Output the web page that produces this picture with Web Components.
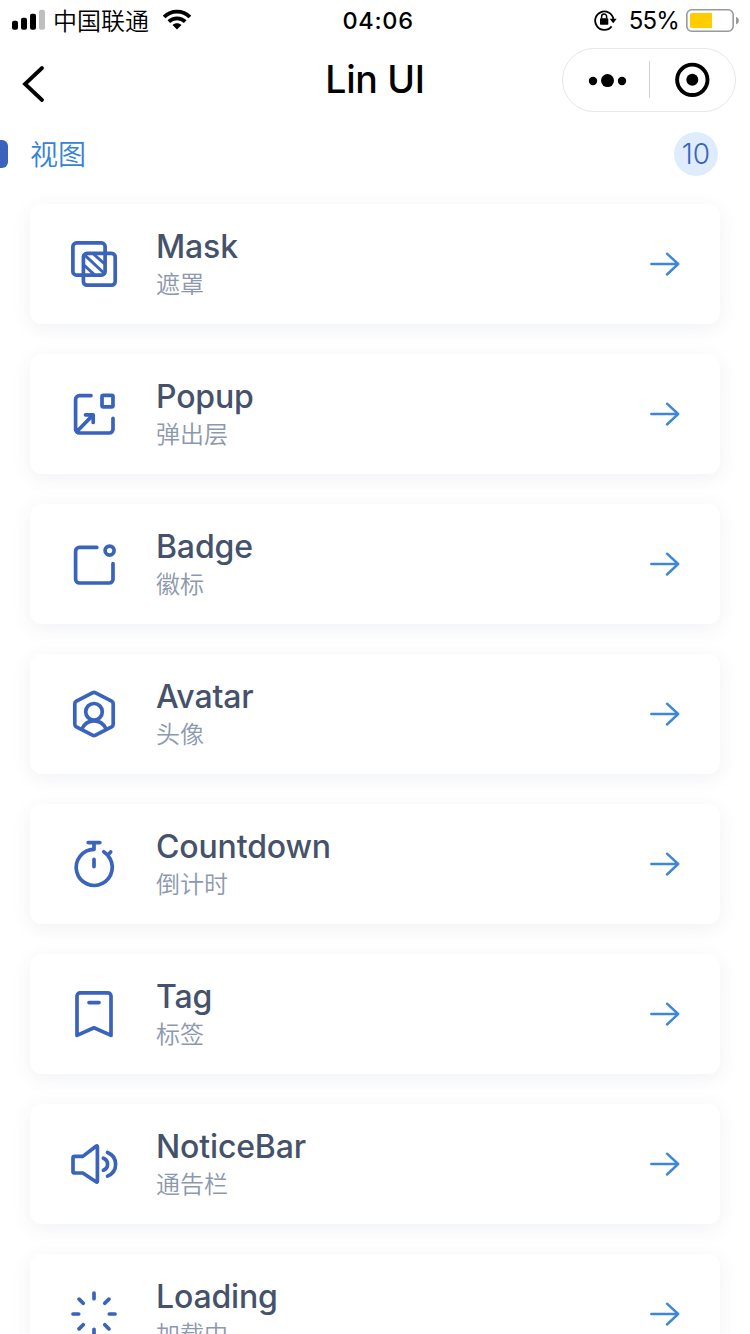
<!DOCTYPE html>
<html lang="zh-CN">
<head>
<meta charset="utf-8">
<title>Lin UI</title>
<style>
html,body{margin:0;background:#fff}
body{width:750px;height:1334px;overflow:hidden;font-family:Inter,"Noto Sans CJK SC",sans-serif}
</style>
</head>
<body>
<lin-page></lin-page>
<script>
const define = (name, html) => customElements.define(name, class extends HTMLElement {
  connectedCallback() {
    if (this.shadowRoot) return;
    const t = document.createElement('template');
    t.innerHTML = typeof html === 'function' ? html(this) : html;
    this.attachShadow({mode: 'open'}).append(t.content.cloneNode(true));
  }
});

const icons = {
  mask: '<rect x="4.9" y="4.9" width="32.2" height="32.2" rx="3.6"/><rect x="15.4" y="15.4" width="31.8" height="31.8" rx="3.6"/><path stroke-width="2.9" d="M17 17.4l18.6 17.4M26.5 17l9.6 8.4M16.4 27.5l9.4 8.6"/>',
  popup: '<path d="M23 7.6H11.4a3.8 3.8 0 0 0-3.8 3.8v29.8A3.8 3.8 0 0 0 11.4 45h29.8a3.8 3.8 0 0 0 3.8-3.8V30.3M9.4 43L24.6 27.4M17.5 26.8H25.2V34.5"/><rect x="34" y="7.4" width="11" height="11.4" rx="1.4"/>',
  badge: '<path d="M28.8 9.4H11.4a3.8 3.8 0 0 0-3.8 3.8v28A3.8 3.8 0 0 0 11.4 45h29.8a3.8 3.8 0 0 0 3.8-3.8V25.6"/><circle cx="41.6" cy="12.6" r="4.5"/>',
  avatar: '<path d="M24.4 4.8Q26 4 27.6 4.8L43.6 13.2Q45.2 14.1 45.2 15.8V36.2Q45.2 37.9 43.6 38.8L27.6 47.2Q26 48 24.4 47.2L8.4 38.8Q6.8 37.9 6.8 36.2V15.8Q6.8 14.1 8.4 13.2Z"/><circle cx="26" cy="23.8" r="8.3"/><path d="M14 40.8C16.2 36 20.6 32.8 26 32.8S35.8 36 38 40.8"/>',
  countdown: '<path d="M40 17.8A18 18 0 1 1 26 11.4V4.9M20.2 4.6H31.8M26 21.4V28.6M35.8 13.8L39.8 17.2L42.7 13.9"/>',
  tag: '<path d="M12.2 4.8H39.8A3.2 3.2 0 0 1 43 8V47.4L26 39.8L9 47.4V8A3.2 3.2 0 0 1 12.2 4.8ZM21 14.6H31"/>',
  noticebar: '<path d="M6.6 18.4H14.8L28 8.3Q29.4 7.4 29.4 9V43Q29.4 44.6 28 43.7L14.8 35H6.6Q5 35 5 33.4V20Q5 18.4 6.6 18.4ZM35.4 20.2C41 22.5 41 30 35.4 32.2M39.5 14.5C50.3 18.8 50.3 33.8 39.5 38.1"/>',
  loading: '<path d="M26 5V10.7M26 41.3V47M5 26H10.7M41.3 26H47M11.1 11.1L15.2 15.2M36.8 36.8L40.9 40.9M40.9 11.1L36.8 15.2M15.2 36.8L11.1 40.9"/>'
};

define('lin-icon', el => `<style>
:host{display:block;width:52px;height:52px;flex:none}
svg{display:block;fill:none;stroke:#3963bc;stroke-width:3.7;stroke-linecap:round;stroke-linejoin:round}
</style><svg width="52" height="52" viewBox="0 0 52 52">${icons[el.getAttribute('name')]}</svg>`);

define('status-bar', `<style>
:host{display:flex;height:40px;align-items:center;color:#000}
.left{display:flex;align-items:center;flex:1;padding-left:12px}
.carrier{font:350 24px/40px "Noto Sans CJK SC",sans-serif;margin:0 14px 0 8px;height:40px}
.time{font-size:23.5px;font-weight:500;line-height:40px;letter-spacing:.7px;width:74px;text-align:center;padding:1px 0 0 4px;box-sizing:border-box}
.right{flex:1;display:flex;align-items:center;justify-content:flex-end;box-sizing:border-box;padding-right:11px}
.pct{font-size:24px;line-height:40px;letter-spacing:-.8px;margin:1px 7px 0 12px;white-space:nowrap}
svg{display:block;flex:none}
</style>
<div class="left">
<svg width="33" height="40" viewBox="0 0 33 40"><rect y="20.7" width="6" height="9" rx="2"/><rect x="9" y="17.8" width="6" height="12" rx="2"/><rect x="18" y="13.8" width="6" height="16" rx="2"/><rect x="27" y="9.8" width="6" height="20" rx="2" fill="#bfbfbf"/></svg>
<span class="carrier">中国联通</span>
<svg width="28" height="40" viewBox="0 0 28 40"><g fill="none" stroke="#000" stroke-width="3.7"><path d="M1.2 17C8 9.7 20 9.7 26.8 17M5.8 21.6C10.2 17.2 17.8 17.2 22.2 21.6"/></g><path d="M9.5 25C12 22.7 16 22.7 18.5 25L14 29.6Z"/></svg>
</div>
<div class="time">04:06</div>
<div class="right">
<svg width="23" height="40" viewBox="0 0 23 40"><path d="M17.6 26.4A9.2 9.2 0 1 1 19.4 19" fill="none" stroke="#000" stroke-width="1.8"/><path d="M15.6 18.8H22.7L19.2 23.2Z"/><rect x="6" y="18.2" width="8.3" height="6.5" rx=".8"/><path d="M7.6 18.5V16.5A2.5 2.5 0 0 1 12.6 16.5V18.5" fill="none" stroke="#000" stroke-width="1.5"/></svg>
<span class="pct">55%</span>
<svg width="53" height="40" viewBox="0 0 53 40"><rect x=".8" y="9.8" width="46.4" height="21.4" rx="5" fill="none" stroke="#999" stroke-width="1.6"/><path d="M4 15A2 2 0 0 1 6 13H26V28H6A2 2 0 0 1 4 26Z" fill="#fc0"/><path d="M50 16.8Q53 18 53 20.5T50 24.5Z" fill="#999"/></svg>
</div>`);

define('nav-bar', `<style>
:host{display:grid;grid-template-columns:188px 1fr 188px;height:88px;align-items:center}
.back{display:block;margin-left:22px}
h1{font-size:37.5px;font-weight:500;line-height:48px;margin:-8px 0 0;text-align:center;letter-spacing:-.3px;color:#000}
.capsule{width:174px;height:64px;box-sizing:border-box;border:1px solid #e6e6e6;border-radius:32px;display:flex;align-items:center;margin-top:-8px}
.capsule svg{display:block;margin:-1px}
</style>
<svg class="back" width="24" height="40" viewBox="0 0 24 40"><path d="M20 4L3 20L20 36" fill="none" stroke="#000" stroke-width="3.8" stroke-linecap="round" stroke-linejoin="miter"/></svg>
<h1>Lin UI</h1>
<div class="capsule"><svg width="174" height="64" viewBox="0 0 174 64"><circle cx="31" cy="33" r="4.2"/><circle cx="45.5" cy="32.6" r="6.5"/><circle cx="60" cy="33" r="4.2"/><path d="M87.5 13V50" stroke="#d0d0d0"/><circle cx="130.3" cy="31.8" r="15.2" fill="none" stroke="#000" stroke-width="3.9"/><circle cx="130.3" cy="31.8" r="6"/></svg></div>`);

define('section-title', `<style>
:host{display:flex;align-items:center;height:52px;padding-right:32px}
.bar{width:8px;height:28px;background:#3963bc;border-radius:0 6px 6px 0;margin-right:22px}
.name{flex:1;font:350 28px/44px "Noto Sans CJK SC",sans-serif;color:#3683d6;padding-bottom:2px}
.count{width:44px;height:44px;border-radius:50%;background:#dfecfd;color:#3963bc;font-size:28px;font-weight:300;line-height:45px;text-align:center}
</style><div class="bar"></div><div class="name"><slot></slot></div><div class="count"><slot name="count"></slot></div>`);

define('lin-card', el => `<style>
:host{display:flex;box-sizing:border-box;width:690px;height:120px;padding:0 40px 0 38px;align-items:center;border-radius:12px;background:#fff;box-shadow:0 4px 20px rgba(50,70,110,.075)}
.text{flex:1;margin-left:36px;height:80px}
.title{font-size:32px;font-weight:500;line-height:44px;letter-spacing:-.15px;padding-top:1px;color:#45526b}
.sub{font:350 24px/32px "Noto Sans CJK SC",sans-serif;margin-top:-2px;color:#8c98ae}
.go{display:block;fill:none;stroke:#3d87d9;stroke-width:2.4;stroke-linecap:round;stroke-linejoin:round}
</style>
<lin-icon name="${el.getAttribute('icon')}"></lin-icon>
<div class="text"><div class="title"><slot></slot></div><div class="sub"><slot name="sub"></slot></div></div>
<svg class="go" width="30" height="24" viewBox="0 0 30 24"><path d="M1.3 12H28.2M17 1.7L28.2 12L17 22.5"/></svg>`);

const items = [['Mask','遮罩'],['Popup','弹出层'],['Badge','徽标'],['Avatar','头像'],['Countdown','倒计时'],['Tag','标签'],['NoticeBar','通告栏'],['Loading','加载中']];
define('lin-page', `<style>
:host{display:block;height:1334px;overflow:hidden;background:#fff}
.list{display:flex;flex-direction:column;gap:30px;padding:24px 30px 0}
</style>
<status-bar></status-bar><nav-bar></nav-bar>
<section-title>视图<span slot="count">10</span></section-title>
<div class="list">${items.map(([t,s]) => `<lin-card icon="${t.toLowerCase()}">${t}<span slot="sub">${s}</span></lin-card>`).join('')}</div>`);
</script>
</body>
</html>
